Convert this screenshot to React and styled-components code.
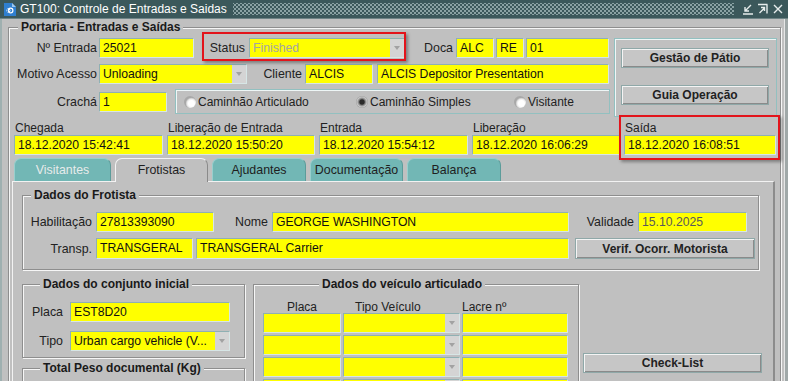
import React from 'react';
import styled, { createGlobalStyle } from 'styled-components';

const GlobalStyle = createGlobalStyle`
  html, body { margin: 0; padding: 0; background: #c0c0c0; overflow: hidden; }
  body { font-family: "Liberation Sans", Arial, sans-serif; font-size: 12px; color: #1e1e1e; }
  * { box-sizing: border-box; }
`;

const Window = styled.div`
  width: 788px;
  height: 381px;
  overflow: hidden;
  display: flex;
  flex-direction: column;
  background: #c0c0c0;
`;

const TitleBar = styled.div`
  height: 19px;
  flex: none;
  display: flex;
  align-items: center;
  background: #3b585b;
  color: #fff;
  padding: 0 4px 0 3px;
  border-bottom: 1px solid #6f8587;
`;

const TitleText = styled.span`
  margin-left: 3px;
  font-size: 12px;
  white-space: nowrap;
`;

const Dots = styled.div`
  flex: 1;
  height: 12px;
  margin: 0 8px 0 6px;
  background-image: radial-gradient(circle, #8aa2a4 0.8px, transparent 1.1px),
    radial-gradient(circle, #8aa2a4 0.8px, transparent 1.1px);
  background-size: 4px 4px;
  background-position: 0 0, 2px 2px;
`;

const WinButtons = styled.div`
  display: flex;
  gap: 3px;
  align-items: center;
`;

const Body = styled.div`
  flex: 1;
  display: flex;
  padding: 8px 0 0 6px;
  border-left: 2px solid #9fb0b0;
  box-shadow: inset -3px 0 0 #a0a8a8, inset -4px 0 0 #e6e6e6;
`;

const Group = styled.div`
  position: relative;
  flex: none;
  width: ${p => p.w}px;
  height: ${p => (p.h ? `${p.h}px` : 'auto')};
  margin-top: ${p => p.mt || 0}px;
  margin-left: ${p => p.ml || 0}px;
  padding: ${p => p.pad || '0'};
  border: 1px solid #8e8e8e;
  box-shadow: inset 1px 1px 0 #f6f6f6, 1px 1px 0 #f6f6f6;
  display: flex;
  flex-direction: column;
`;

const Legend = styled.span`
  position: absolute;
  top: -8px;
  left: ${p => p.left}px;
  padding: 0 3px;
  background: #c0c0c0;
  font-weight: bold;
  font-size: 12px;
  line-height: 14px;
  color: #1a1a1a;
  white-space: nowrap;
`;

const TopArea = styled.div`
  display: flex;
  align-items: flex-start;
  padding-top: 10px;
`;

const Rows = styled.div`
  width: 605px;
  display: flex;
  flex-direction: column;
`;

const Row = styled.div`
  display: flex;
  align-items: center;
  height: ${p => p.h || 20}px;
  margin-top: ${p => p.mt || 0}px;
`;

const Label = styled.span`
  flex: none;
  width: ${p => p.w}px;
  padding-right: ${p => (p.pr === undefined ? 3 : p.pr)}px;
  text-align: right;
  white-space: nowrap;
  font-size: 12.4px;
  color: #222;
`;

const Input = styled.div`
  flex: none;
  width: ${p => p.w}px;
  height: ${p => p.h || 20}px;
  margin-left: ${p => p.ml || 0}px;
  background: #ffff00;
  border: 1px solid #8fb0b3;
  border-right-color: #d7e6e6;
  border-bottom-color: #d7e6e6;
  padding: 0 3px;
  line-height: 18px;
  font-size: 12.2px;
  color: ${p => p.tone || '#111'};
  white-space: nowrap;
  overflow: hidden;
`;

const SelectBox = styled(Input)`
  display: flex;
  padding: 0 0 0 3px;
`;

const SelectText = styled.span`
  flex: 1;
  overflow: hidden;
`;

const SelectArrow = styled.span`
  width: 14px;
  flex: none;
  background: #d4d4d4;
  display: flex;
  align-items: center;
  justify-content: center;
  &::after {
    content: '';
    border-left: 3.5px solid transparent;
    border-right: 3.5px solid transparent;
    border-top: 4px solid #a2a2a2;
  }
`;

const Highlight = styled.div`
  position: relative;
  display: flex;
  flex-direction: ${p => p.dir || 'row'};
  align-items: ${p => (p.dir === 'column' ? 'stretch' : 'center')};
  margin-left: ${p => p.ml || 0}px;
  &::after {
    content: '';
    position: absolute;
    inset: ${p => p.inset};
    border: 2px solid #e3141b;
    box-shadow: 2px 2px 3px rgba(0, 0, 0, 0.35);
    pointer-events: none;
  }
`;

const RadioBox = styled.div`
  flex: none;
  width: 435px;
  height: 25px;
  margin-left: 8px;
  display: flex;
  align-items: center;
  padding-left: 8px;
  border: 1px solid #92c0c0;
  box-shadow: inset 1px 1px 0 #eef6f6;
`;

const RadioItem = styled.label`
  width: ${p => p.w}px;
  display: flex;
  align-items: center;
  font-size: 12px;
  color: #222;
`;

const RadioDot = styled.span`
  width: 12px;
  height: 12px;
  border-radius: 50%;
  margin-right: 2px;
  background: ${p =>
    p.checked
      ? 'radial-gradient(circle at 50% 50%, #2a2a2a 0 2.2px, #7a7a7a 3.2px, #c8c8c8 5px, #9a9a9a 6px)'
      : 'radial-gradient(circle at 62% 62%, #ffffff 0 3px, #e8e8e8 4.5px, #a8a8a8 6px)'};
`;

const ButtonBox = styled.div`
  flex: none;
  width: 163px;
  height: 79px;
  display: flex;
  flex-direction: column;
  gap: 17px;
  padding: 9px 0 0 6px;
  border: 1px solid #92c0c0;
  box-shadow: inset 1px 1px 0 #eef6f6;
`;

const Button = styled.div`
  flex: none;
  width: ${p => p.w}px;
  height: ${p => p.h || 20}px;
  margin-left: ${p => p.ml || 0}px;
  display: flex;
  align-items: center;
  justify-content: center;
  background: #c6c6c6;
  border: 1px solid #8fa8a8;
  box-shadow: inset 1px 1px 0 #f4f4f4, inset -1px -1px 0 #8a8a8a;
  font-weight: bold;
  font-size: 12px;
  color: #222;
  white-space: nowrap;
`;

const TimesRow = styled.div`
  display: flex;
  gap: 4px;
  margin-top: 4px;
  padding-left: 5px;
`;

const TimeCol = styled.div`
  display: flex;
  flex-direction: column;
  width: ${p => p.w}px;
`;

const TimeLabel = styled.span`
  height: 14px;
  line-height: 14px;
  font-size: 12px;
  color: #222;
  padding-left: 1px;
`;

const TabStrip = styled.div`
  display: flex;
  gap: 4px;
  margin-top: 3px;
  padding-left: 5px;
  align-items: flex-end;
  height: 23px;
`;

const Tab = styled.div`
  width: ${p => p.w}px;
  height: ${p => (p.active ? 24 : 23)}px;
  margin-bottom: ${p => (p.active ? -1 : 0)}px;
  position: relative;
  z-index: ${p => (p.active ? 2 : 0)};
  display: flex;
  align-items: center;
  justify-content: center;
  padding-bottom: ${p => (p.active ? 2 : 0)}px;
  border-radius: 7px 7px 0 0;
  background: ${p => (p.active ? '#c0c0c0' : '#72b7b5')};
  border: 1px solid ${p => (p.active ? '#f4f4f4' : '#98cfcd')};
  border-right-color: ${p => (p.active ? '#8a8a8a' : '#5c9c9a')};
  border-bottom: none;
  font-size: 12.4px;
  color: ${p => (p.disabled ? '#e4eeee' : '#1e1e1e')};
  text-shadow: ${p => (p.disabled ? '0 0 1px #7fa9a8' : 'none')};
`;

const Panel = styled.div`
  position: relative;
  z-index: 1;
  margin-left: 3px;
  width: 763px;
  flex: 1;
  border-top: 1px solid #f2f2f2;
  border-left: 1px solid #f2f2f2;
  border-right: 2px solid #8c8c8c;
  padding: 13px 0 0 9px;
  display: flex;
  flex-direction: column;
`;

const LowerArea = styled.div`
  display: flex;
  align-items: flex-start;
  margin-top: 14px;
`;

const LeftCol = styled.div`
  display: flex;
  flex-direction: column;
`;

const HeadRow = styled.div`
  display: grid;
  grid-template-columns: 78px 117px 106px;
  column-gap: 2px;
  height: 12px;
  line-height: 12px;
  font-size: 12px;
  color: #222;
`;

const Head = styled.span`
  text-align: ${p => p.align || 'left'};
  padding-left: ${p => p.pl || 0}px;
  white-space: nowrap;
`;

const Grid = styled.div`
  display: grid;
  grid-template-columns: 78px 117px 106px;
  grid-auto-rows: 20px;
  gap: 2px;
`;

const CheckArea = styled.div`
  padding-top: 69px;
  margin-left: 4px;
`;

const AppIcon = () => (
  <svg width="14" height="15" viewBox="0 0 14 15">
    <path d="M1 1h8l4 4v9H1z" fill="#2f7fcf" />
    <path d="M9 1v4h4" fill="#9cc8f0" />
    <path d="M4 6.5l3 2-3 2z M7.5 8.5a2 2 0 1 0 0 .01" fill="#fff" />
    <circle cx="7.6" cy="8.5" r="2.3" fill="none" stroke="#fff" strokeWidth="1.2" />
  </svg>
);

const WinIcon = ({ kind }) => (
  <svg width="12" height="12" viewBox="0 0 12 12" fill="none" stroke="#e6ecec" strokeWidth="1.4">
    {kind === 'min' && <path d="M1 11h10 M9 2L3 8 M3 4v4h4" />}
    {kind === 'max' && <path d="M1 1.5h9.5 M10 1.5v9 M2.5 10L7.5 5 M4 4.5h3.5V8" />}
    {kind === 'close' && <path d="M2 2l8 8 M10 2l-8 8" />}
  </svg>
);

const Select = ({ w, ml, children, tone }) => (
  <SelectBox w={w} ml={ml} tone={tone}>
    <SelectText>{children}</SelectText>
    <SelectArrow />
  </SelectBox>
);

const times = [
  { label: 'Chegada', value: '18.12.2020 15:42:41', w: 149 },
  { label: 'Liberação de Entrada', value: '18.12.2020 15:50:20', w: 148 },
  { label: 'Entrada', value: '18.12.2020 15:54:12', w: 149 },
  { label: 'Liberação', value: '18.12.2020 16:06:29', w: 148 },
];

const tabs = [
  { name: 'Visitantes', w: 97, disabled: true },
  { name: 'Frotistas', w: 93, active: true },
  { name: 'Ajudantes', w: 94 },
  { name: 'Documentação', w: 93 },
  { name: 'Balança', w: 94 },
];

const App = () => {
  return (
    <>
      <GlobalStyle />
      <Window>
        <TitleBar>
          <AppIcon />
          <TitleText>GT100: Controle de Entradas e Saidas</TitleText>
          <Dots />
          <WinButtons>
            <WinIcon kind="min" />
            <WinIcon kind="max" />
            <WinIcon kind="close" />
          </WinButtons>
        </TitleBar>
        <Body>
          <Group w={773} h={400}>
            <Legend left={9}>Portaria - Entradas e Saídas</Legend>
            <TopArea>
              <Rows>
                <Row>
                  <Label w={90} pr={2}>Nº Entrada</Label>
                  <Input w={95}>25021</Input>
                  <Highlight ml={12} inset="-6px -1px -3px -4px">
                    <Label w={43} pr={4}>Status</Label>
                    <Select w={156} tone="#a4a4a4">Finished</Select>
                  </Highlight>
                  <Label w={51}>Doca</Label>
                  <Input w={38}>ALC</Input>
                  <Input w={28} ml={2}>RE</Input>
                  <Input w={83} ml={2}>01</Input>
                </Row>
                <Row mt={6}>
                  <Label w={90} pr={2}>Motivo Acesso</Label>
                  <Select w={148}>Unloading</Select>
                  <Label w={58}>Cliente</Label>
                  <Input w={68}>ALCIS</Input>
                  <Input w={232} ml={4}>ALCIS Depositor Presentation</Input>
                </Row>
                <Row mt={5} h={25}>
                  <Label w={90} pr={2}>Crachá</Label>
                  <Input w={68}>1</Input>
                  <RadioBox>
                    <RadioItem w={172}><RadioDot />Caminhão Articulado</RadioItem>
                    <RadioItem w={158}><RadioDot checked />Caminhão Simples</RadioItem>
                    <RadioItem w={90}><RadioDot />Visitante</RadioItem>
                  </RadioBox>
                </Row>
              </Rows>
              <ButtonBox>
                <Button w={148}>Gestão de Pátio</Button>
                <Button w={148}>Guia Operação</Button>
              </ButtonBox>
            </TopArea>

            <TimesRow>
              {times.map(t => (
                <TimeCol key={t.label} w={t.w}>
                  <TimeLabel>{t.label}</TimeLabel>
                  <Input w={t.w}>{t.value}</Input>
                </TimeCol>
              ))}
              <Highlight dir="column" inset="-6px -4px -5px -5px">
                <TimeCol w={152}>
                  <TimeLabel>Saída</TimeLabel>
                  <Input w={152}>18.12.2020 16:08:51</Input>
                </TimeCol>
              </Highlight>
            </TimesRow>

            <TabStrip>
              {tabs.map(t => (
                <Tab key={t.name} w={t.w} active={t.active} disabled={t.disabled}>
                  {t.name}
                </Tab>
              ))}
            </TabStrip>

            <Panel>
              <Group w={737} pad="16px 0 10px 0">
                <Legend left={8}>Dados do Frotista</Legend>
                <Row>
                  <Label w={73} pr={4}>Habilitação</Label>
                  <Input w={118}>27813393090</Input>
                  <Label w={58} pr={4}>Nome</Label>
                  <Input w={297}>GEORGE WASHINGTON</Input>
                  <Label w={69} pr={4}>Validade</Label>
                  <Input w={109} tone="#5a5a5a">15.10.2025</Input>
                </Row>
                <Row mt={6} h={21}>
                  <Label w={73} pr={4}>Transp.</Label>
                  <Input w={97} h={21}>TRANSGERAL</Input>
                  <Input w={373} h={21} ml={3}>TRANSGERAL Carrier</Input>
                  <Button w={180} h={21} ml={6}>Verif. Ocorr. Motorista</Button>
                </Row>
              </Group>

              <LowerArea>
                <LeftCol>
                  <Group w={223} pad="17px 0 6px 0">
                    <Legend left={17}>Dados do conjunto inicial</Legend>
                    <Row>
                      <Label w={47} pr={7}>Placa</Label>
                      <Input w={160}>EST8D20</Input>
                    </Row>
                    <Row mt={9}>
                      <Label w={47} pr={7}>Tipo</Label>
                      <Select w={160}>Urban cargo vehicle (V...</Select>
                    </Row>
                  </Group>
                  <Group w={223} h={40} mt={10}>
                    <Legend left={17}>Total Peso documental (Kg)</Legend>
                  </Group>
                </LeftCol>

                <Group w={326} h={120} ml={8} pad="16px 0 0 9px">
                  <Legend left={65}>Dados do veículo articulado</Legend>
                  <HeadRow>
                    <Head align="center">Placa</Head>
                    <Head pl={12}>Tipo Veículo</Head>
                    <Head>Lacre nº</Head>
                  </HeadRow>
                  <Grid>
                    {[0, 1, 2, 3].map(i => (
                      <React.Fragment key={i}>
                        <Input w={78} />
                        <Select w={117} />
                        <Input w={106} />
                      </React.Fragment>
                    ))}
                  </Grid>
                </Group>

                <CheckArea>
                  <Button w={179}>Check-List</Button>
                </CheckArea>
              </LowerArea>
            </Panel>
          </Group>
        </Body>
      </Window>
    </>
  );
};

export default App;
